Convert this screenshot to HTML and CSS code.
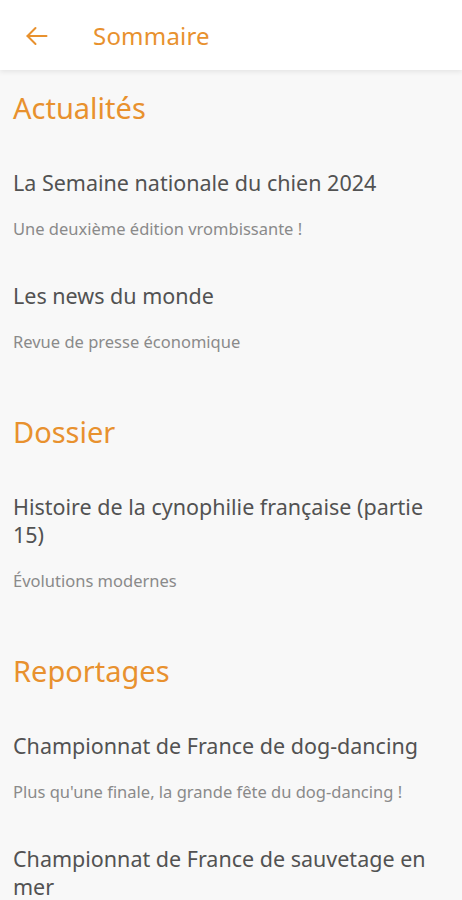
FILE: index.html
```html
<!DOCTYPE html>
<html lang="fr">
<head>
    <meta charset="UTF-8">
    <meta name="viewport" content="width=device-width, initial-scale=1.0">
    <title>Sommaire</title>
    <link rel="stylesheet" href="styles.css">
</head>
<body>
    <header class="topbar">
        <button class="back" aria-label="Retour">
            <svg width="23" height="20" viewBox="0 0 23 20" fill="none" stroke="currentColor" stroke-width="2" stroke-linecap="round" stroke-linejoin="round">
                <path d="M21.5 10H2.5"/>
                <path d="M10.5 2L2.5 10L10.5 18"/>
            </svg>
        </button>
        <h1>Sommaire</h1>
    </header>

    <main class="summary">
        <section class="section">
            <h2>Actualités</h2>
            <div class="item">
                <div class="item-title">La Semaine nationale du chien 2024</div>
                <div class="item-sub">Une deuxième édition vrombissante !</div>
            </div>
            <div class="item">
                <div class="item-title">Les news du monde</div>
                <div class="item-sub">Revue de presse économique</div>
            </div>
        </section>

        <section class="section">
            <h2>Dossier</h2>
            <div class="item">
                <div class="item-title">Histoire de la cynophilie française (partie 15)</div>
                <div class="item-sub">Évolutions modernes</div>
            </div>
        </section>

        <section class="section">
            <h2>Reportages</h2>
            <div class="item">
                <div class="item-title">Championnat de France de dog-dancing</div>
                <div class="item-sub">Plus qu'une finale, la grande fête du dog-dancing !</div>
            </div>
            <div class="item">
                <div class="item-title">Championnat de France de sauvetage en mer</div>
            </div>
        </section>
    </main>
</body>
</html>
```

FILE: styles.css
```css
* { margin: 0; padding: 0; box-sizing: border-box; }
body {
    background: #f8f8f8;
    font-family: "Noto Sans", Roboto, sans-serif;
    color: #555;
}
.topbar {
    height: 70px;
    background: #fff;
    display: flex;
    align-items: center;
    gap: 45px;
    padding: 0 0 0 25px;
    box-shadow: 0 2px 5px rgba(0, 0, 0, 0.08);
    position: relative;
}
.back {
    background: none;
    border: none;
    color: #e8912e;
    display: flex;
    margin-top: 2px;
}
.topbar h1 {
    font-size: 24px;
    font-weight: 400;
    color: #e8912e;
    letter-spacing: 0.2px;
}
.summary {
    padding: 18px 13px 0;
}
.section + .section {
    margin-top: 60px;
}
.section h2 {
    font-size: 29px;
    line-height: 40px;
    font-weight: 400;
    color: #e8912e;
}
.item {
    padding-top: 41px;
}
.item + .item {
    padding-top: 43px;
}
.item-title {
    font-size: 21.5px;
    line-height: 28px;
    color: #525252;
}
.item-sub {
    margin-top: 22px;
    font-size: 16.5px;
    line-height: 20px;
    color: #8a8a8a;
}
```
